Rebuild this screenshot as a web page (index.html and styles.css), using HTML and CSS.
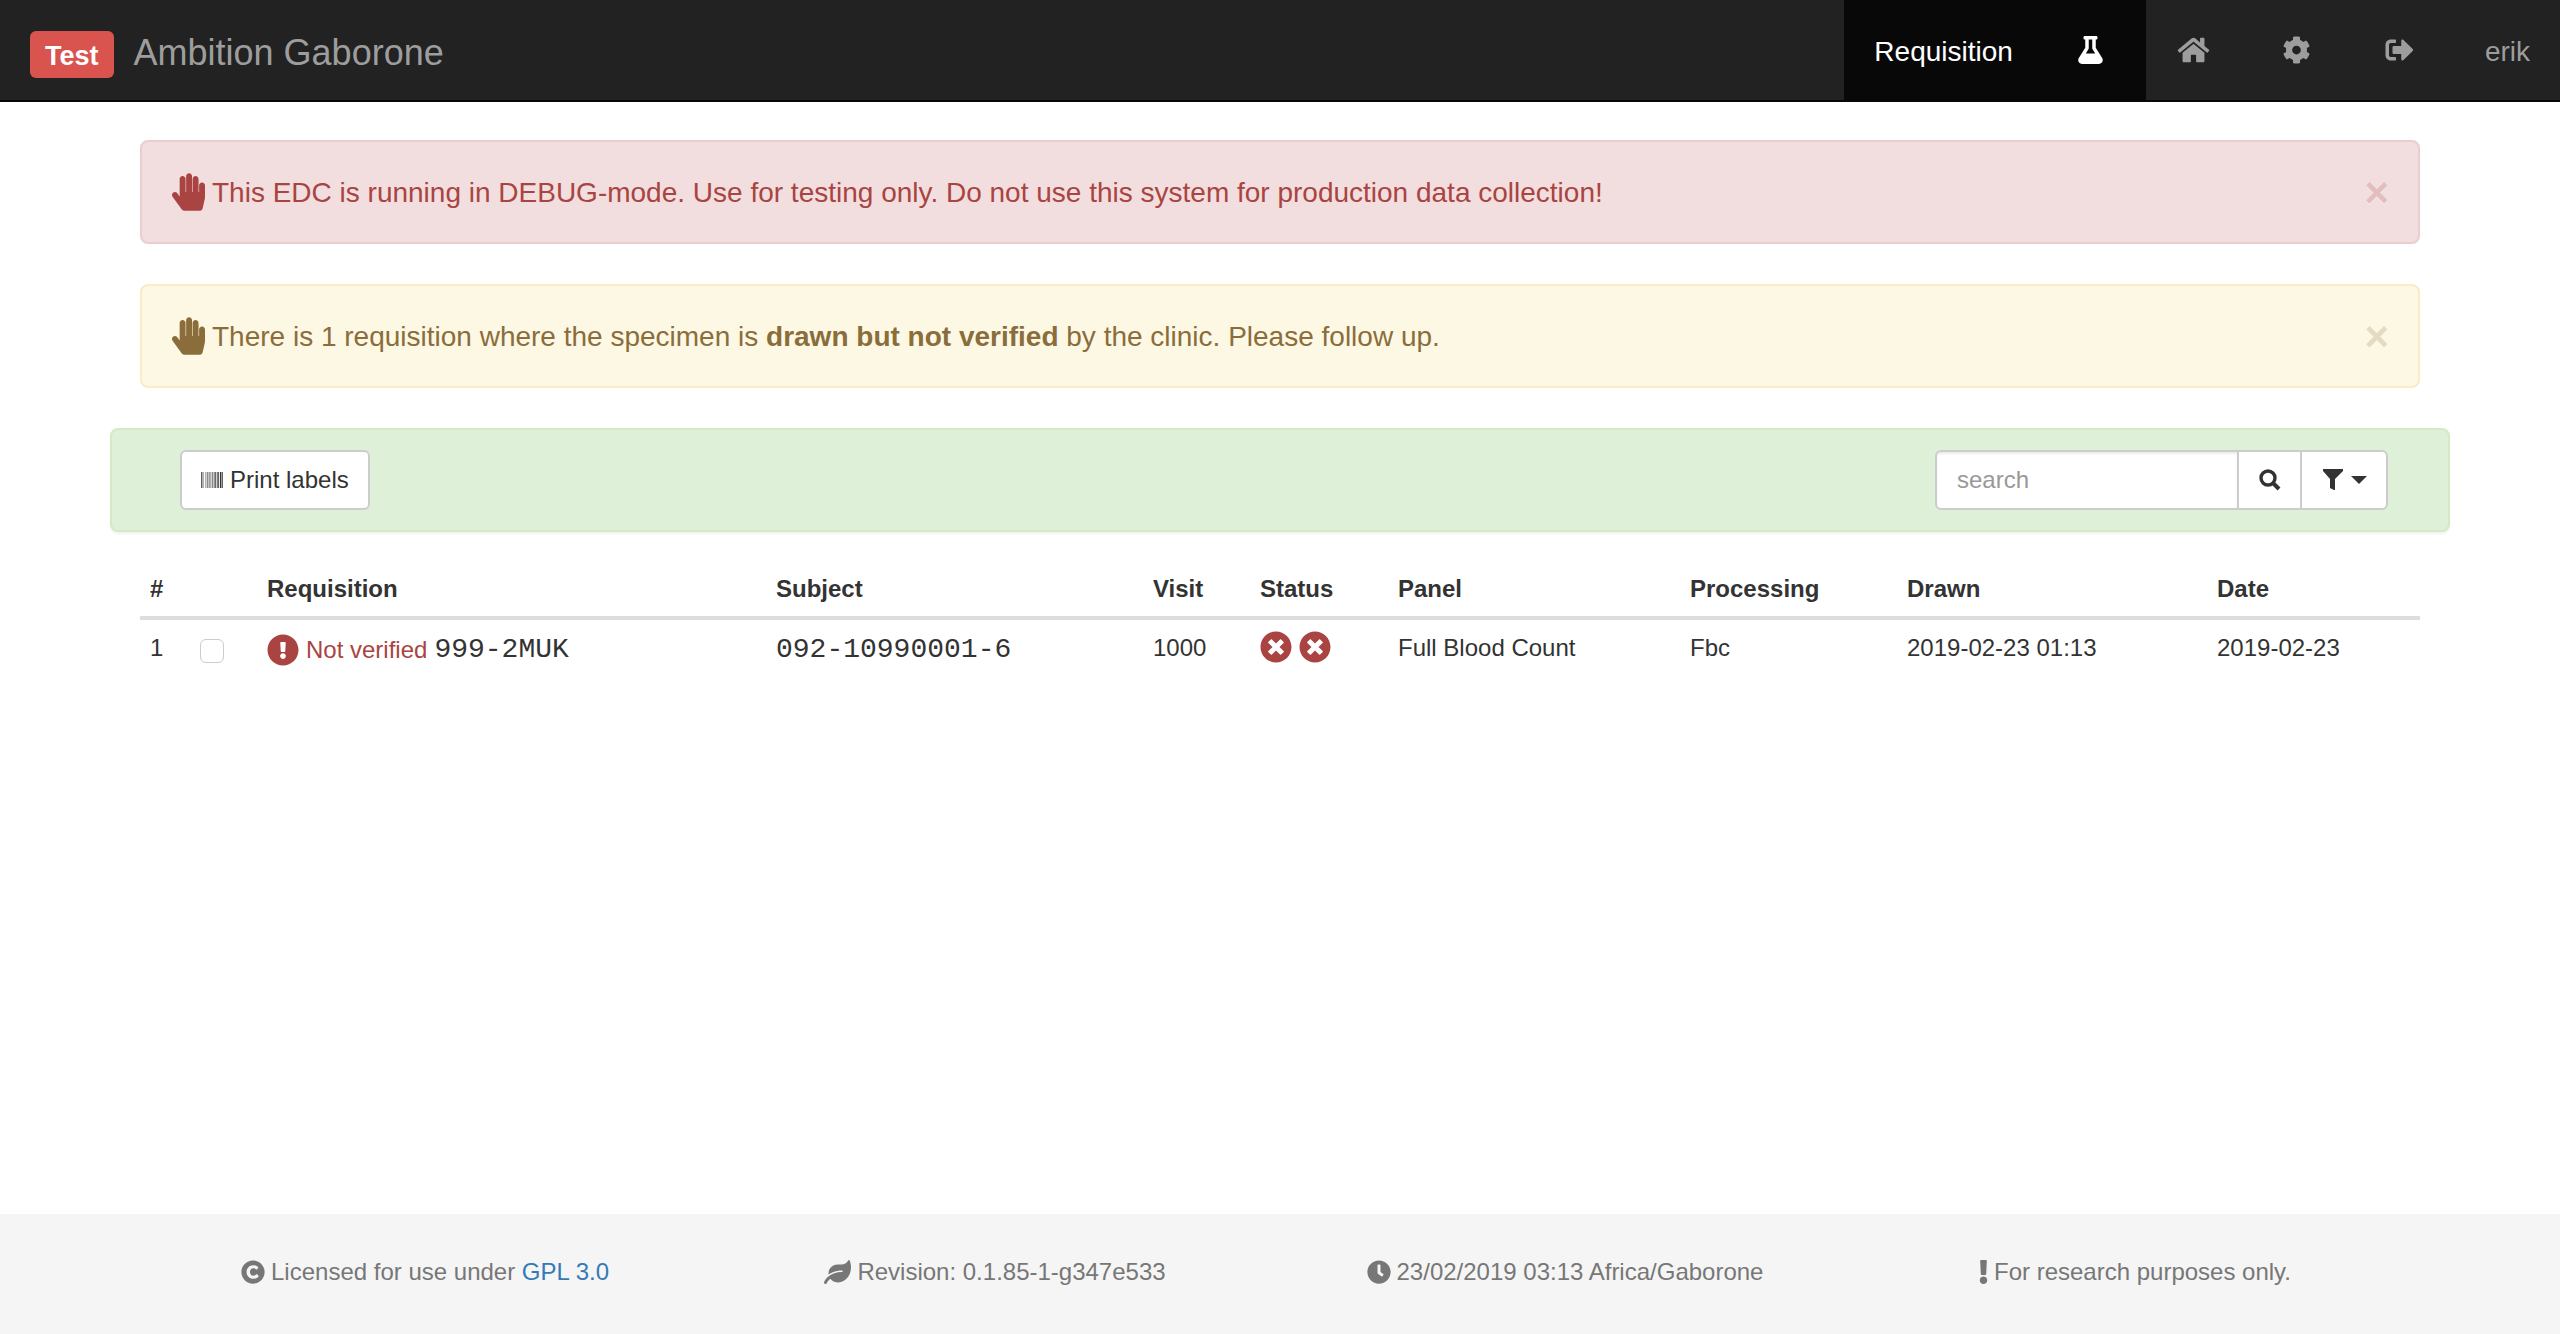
FILE: index.html
```html
<!DOCTYPE html>
<html lang="en">
<head>
<meta charset="utf-8">
<title>Ambition Gaborone</title>
<link rel="stylesheet" href="styles.css">
</head>
<body>
<nav class="navbar">
  <div class="brand"><span class="label">Test</span><a class="brand-link" href="#">Ambition Gaborone</a></div>
  <ul class="nav">
    <li class="active"><a href="#">Requisition</a></li>
    <li class="active"><a href="#" class="icon-link" aria-label="Laboratory"><svg class="nav-icon" viewBox="-96 0 640 512"><path d="M437.2 403.5L320 215V64h8c13.3 0 24-10.7 24-24V24c0-13.3-10.7-24-24-24H120c-13.3 0-24 10.7-24 24v16c0 13.3 10.7 24 24 24h8v151L10.8 403.5C-18.5 450.6 15.3 512 70.9 512h306.2c55.7 0 89.4-61.5 60.1-108.5zM137.9 320l48.2-77.6c3.7-5.2 5.8-11.6 5.8-18.4V64h64v160c0 6.9 2.2 13.2 5.8 18.4l48.2 77.6h-172z"/></svg></a></li>
    <li><a href="#" class="icon-link" aria-label="Home"><svg class="nav-icon" viewBox="-32 0 640 512"><path d="M488 312.7V456c0 13.3-10.7 24-24 24H348c-6.6 0-12-5.4-12-12V356c0-6.6-5.4-12-12-12h-72c-6.6 0-12 5.4-12 12v112c0 6.6-5.4 12-12 12H112c-13.3 0-24-10.7-24-24V312.7c0-3.6 1.6-7 4.4-9.3l188-154.8c4.4-3.6 10.8-3.6 15.3 0l188 154.8c2.7 2.3 4.3 5.7 4.3 9.3zm83.6-60.9L488 182.9V44.4c0-6.6-5.4-12-12-12h-56c-6.6 0-12 5.4-12 12V117l-89.5-73.7c-17.7-14.6-43.3-14.6-61 0L4.4 251.8c-5.1 4.2-5.8 11.8-1.6 16.9l25.5 31c4.2 5.1 11.8 5.8 16.9 1.6l235.2-193.7c4.4-3.6 10.8-3.6 15.3 0l235.2 193.7c5.1 4.2 12.7 3.5 16.9-1.6l25.5-31c4.2-5.2 3.4-12.7-1.7-16.9z"/></svg></a></li>
    <li><a href="#" class="icon-link" aria-label="Administration"><svg class="nav-icon" viewBox="-64 0 640 512"><path d="M487.4 315.7l-42.6-24.6c4.3-23.2 4.3-47 0-70.2l42.6-24.6c4.9-2.8 7.1-8.6 5.5-14-11.1-35.6-30-67.8-54.7-94.6-3.8-4.1-10-5.1-14.8-2.3L380.8 110c-17.9-15.4-38.5-27.3-60.8-35.1V25.8c0-5.6-3.9-10.5-9.4-11.7-36.7-8.2-74.3-7.8-109.2 0-5.5 1.2-9.4 6.1-9.4 11.7V75c-22.2 7.9-42.8 19.8-60.8 35.1L88.7 85.5c-4.9-2.8-11-1.9-14.8 2.3-24.7 26.7-43.6 58.9-54.7 94.6-1.7 5.4.6 11.2 5.5 14L67.3 221c-4.3 23.2-4.3 47 0 70.2l-42.6 24.6c-4.9 2.8-7.1 8.6-5.5 14 11.1 35.6 30 67.8 54.7 94.6 3.8 4.1 10 5.1 14.8 2.3l42.6-24.6c17.9 15.4 38.5 27.3 60.8 35.1v49.2c0 5.6 3.9 10.5 9.4 11.7 36.7 8.2 74.3 7.8 109.2 0 5.5-1.2 9.4-6.1 9.4-11.7v-49.2c22.2-7.9 42.8-19.8 60.8-35.1l42.6 24.6c4.9 2.8 11 1.9 14.8-2.3 24.7-26.7 43.6-58.9 54.7-94.6 1.5-5.5-.7-11.3-5.6-14.1zM256 336c-44.1 0-80-35.9-80-80s35.9-80 80-80 80 35.9 80 80-35.9 80-80 80z"/></svg></a></li>
    <li><a href="#" class="icon-link" aria-label="Log out"><svg class="nav-icon" viewBox="-64 0 640 512"><path d="M497 273L329 441c-15 15-41 4.5-41-17v-96H152c-13.3 0-24-10.7-24-24v-96c0-13.3 10.7-24 24-24h136V88c0-21.4 25.9-32 41-17l168 168c9.3 9.4 9.3 24.6 0 34zM192 436v-40c0-6.6-5.4-12-12-12H96c-17.7 0-32-14.3-32-32V160c0-17.7 14.3-32 32-32h84c6.6 0 12-5.4 12-12V76c0-6.6-5.4-12-12-12H96c-53 0-96 43-96 96v192c0 53 43 96 96 96h84c6.6 0 12-5.4 12-12z"/></svg></a></li>
    <li><a href="#">erik</a></li>
  </ul>
</nav>

<main class="container">
  <div class="alert alert-danger" role="alert">
    <svg class="alert-icon" viewBox="0 0 448 512"><path d="M408.781 128.007C386.356 127.578 368 146.36 368 168.79V256h-8V79.79c0-22.43-18.356-41.212-40.781-40.783C297.488 39.423 280 57.169 280 79v177h-8V40.79C272 18.36 253.644-.422 231.219.007 209.488.423 192 18.169 192 40v216h-8V80.79c0-22.43-18.356-41.212-40.781-40.783C121.488 40.423 104 58.169 104 80v235.992l-31.648-43.519c-12.993-17.866-38.009-21.817-55.877-8.823-17.865 12.994-21.815 38.01-8.822 55.877l125.601 172.705A48 48 0 0 0 172.073 512h197.59c22.274 0 41.622-15.324 46.724-37.006l26.508-112.66a192.011 192.011 0 0 0 5.104-43.975V168c.001-21.831-17.487-39.577-39.218-39.993z"/></svg>
    <span class="alert-text">This EDC is running in DEBUG-mode. Use for testing only. Do not use this system for production data collection!</span>
    <button type="button" class="close" aria-label="Close">×</button>
  </div>
  <div class="alert alert-warning" role="alert">
    <svg class="alert-icon" viewBox="0 0 448 512"><path d="M408.781 128.007C386.356 127.578 368 146.36 368 168.79V256h-8V79.79c0-22.43-18.356-41.212-40.781-40.783C297.488 39.423 280 57.169 280 79v177h-8V40.79C272 18.36 253.644-.422 231.219.007 209.488.423 192 18.169 192 40v216h-8V80.79c0-22.43-18.356-41.212-40.781-40.783C121.488 40.423 104 58.169 104 80v235.992l-31.648-43.519c-12.993-17.866-38.009-21.817-55.877-8.823-17.865 12.994-21.815 38.01-8.822 55.877l125.601 172.705A48 48 0 0 0 172.073 512h197.59c22.274 0 41.622-15.324 46.724-37.006l26.508-112.66a192.011 192.011 0 0 0 5.104-43.975V168c.001-21.831-17.487-39.577-39.218-39.993z"/></svg>
    <span class="alert-text">There is 1 requisition where the specimen is <strong>drawn but not verified</strong> by the clinic. Please follow up.</span>
    <button type="button" class="close" aria-label="Close">×</button>
  </div>

  <form class="toolbar">
    <button type="button" class="btn print"><svg class="barcode" viewBox="0 64 512 384" preserveAspectRatio="none"><path d="M0 448V64h18v384H0zm26.857-.273V64H36v383.727h-9.143zm27.143 0V64h8.857v383.727H54zm44.857 0V64h8.857v383.727h-8.857zm36 0V64h17.714v383.727h-17.714zm44.857 0V64h8.857v383.727h-8.857zm18 0V64h8.857v383.727h-8.857zm18 0V64h8.857v383.727h-8.857zm35.715 0V64h18v383.727h-18zm44.857 0V64h18v383.727h-18zm35.999 0V64h18.001v383.727h-18.001zm36.001 0V64h18.001v383.727h-18.001zm26.857 0V64h18v383.727h-18zm45.143 0V64h26.857v383.727h-26.857zm35.714 0V64h9.143v383.727H476zm18 .273V64h18v384h-18z"/></svg>Print labels</button>
    <div class="search-group">
      <input class="search" type="text" placeholder="search" aria-label="search">
      <button type="button" class="btn find" aria-label="Search"><svg class="btn-icon" viewBox="0 0 22 22"><circle cx="9" cy="9" r="7" fill="none" stroke="currentColor" stroke-width="3.4"/><path d="M14 14l6 6" stroke="currentColor" stroke-width="4"/></svg></button>
      <button type="button" class="btn filter" aria-label="Filter"><svg class="btn-icon" viewBox="0 0 22 22"><path d="M1 0h20v2l-8 8v11h-1l-4-2v-9l-7-8z"/></svg><span class="caret"></span></button>
    </div>
  </form>

  <table class="results">
    <colgroup><col class="c-num"><col class="c-check"><col class="c-req"><col class="c-subject"><col class="c-visit"><col class="c-status"><col class="c-panel"><col class="c-proc"><col class="c-drawn"><col class="c-date"></colgroup>
    <thead>
      <tr><th>#</th><th></th><th>Requisition</th><th>Subject</th><th>Visit</th><th>Status</th><th>Panel</th><th>Processing</th><th>Drawn</th><th>Date</th></tr>
    </thead>
    <tbody>
      <tr>
        <td>1</td>
        <td><input class="tick" type="checkbox" aria-label="Select 999-2MUK"></td>
        <td><div class="req"><svg class="mark" viewBox="0 0 512 512"><path d="M504 256c0 136.997-111.043 248-248 248S8 392.997 8 256C8 119.083 119.043 8 256 8s248 111.083 248 248zm-248 50c-25.405 0-46 20.595-46 46s20.595 46 46 46 46-20.595 46-46-20.595-46-46-46zm-43.673-165.346l7.418 136c.347 6.364 5.609 11.346 11.982 11.346h48.546c6.373 0 11.635-4.982 11.982-11.346l7.418-136c.375-6.874-5.098-12.654-11.982-12.654h-63.383c-6.884 0-12.356 5.78-11.981 12.654z"/></svg><span class="danger">Not verified</span><span class="mono">999-2MUK</span></div></td>
        <td><div class="req"><span class="mono">092-10990001-6</span></div></td>
        <td>1000</td>
        <td><div class="marks"><svg class="mark" viewBox="0 0 512 512"><path d="M256 8C119 8 8 119 8 256s111 248 248 248 248-111 248-248S393 8 256 8zm121.600 313.100c4.700 4.700 4.700 12.300 0 17L338 377.600c-4.700 4.700-12.300 4.700-17 0L256 312l-65.100 65.600c-4.700 4.700-12.300 4.700-17 0L134.400 338c-4.700-4.700-4.700-12.300 0-17l65.600-65-65.600-65.100c-4.700-4.700-4.700-12.300 0-17l39.600-39.600c4.700-4.700 12.300-4.700 17 0l65 65.700 65.100-65.600c4.700-4.700 12.300-4.700 17 0l39.600 39.600c4.700 4.700 4.700 12.300 0 17L312 256l65.600 65.100z"/></svg><svg class="mark" viewBox="0 0 512 512"><path d="M256 8C119 8 8 119 8 256s111 248 248 248 248-111 248-248S393 8 256 8zm121.600 313.100c4.700 4.700 4.700 12.300 0 17L338 377.600c-4.700 4.700-12.300 4.700-17 0L256 312l-65.100 65.600c-4.700 4.700-12.300 4.700-17 0L134.400 338c-4.700-4.700-4.700-12.300 0-17l65.600-65-65.600-65.100c-4.700-4.700-4.700-12.300 0-17l39.600-39.600c4.700-4.700 12.300-4.700 17 0l65 65.700 65.100-65.600c4.700-4.700 12.300-4.700 17 0l39.600 39.600c4.700 4.700 4.700 12.300 0 17L312 256l65.600 65.100z"/></svg></div></td>
        <td>Full Blood Count</td>
        <td>Fbc</td>
        <td>2019-02-23 01:13</td>
        <td>2019-02-23</td>
      </tr>
    </tbody>
  </table>
</main>

<footer class="footer">
  <div class="footer-row">
    <div class="note"><svg class="foot-icon" viewBox="0 0 512 512"><path d="M256 8C119.033 8 8 119.033 8 256s111.033 248 248 248 248-111.033 248-248S392.967 8 256 8zm117.134 346.753c-1.592 1.867-39.776 45.731-109.851 45.731-84.692 0-144.484-63.260-144.484-145.567 0-81.303 62.004-143.401 143.762-143.401 66.957 0 101.965 37.315 103.422 38.904a12 12 0 0 1 1.238 14.623l-22.380 34.655c-4.049 6.267-12.774 7.351-18.234 2.295-.233-.214-26.529-23.880-61.880-23.880-46.116 0-73.916 33.575-73.916 76.082 0 39.602 25.514 79.692 74.277 79.692 38.697 0 65.280-28.338 65.544-28.625 5.132-5.565 14.059-5.033 18.508 1.053l24.547 33.572a12.001 12.001 0 0 1-.553 14.866z"/></svg><span>Licensed for use under <a class="link" href="#">GPL 3.0</a></span></div>
    <div class="note"><svg class="foot-icon" viewBox="0 0 576 512"><path d="M546.200 9.700c-5.600-12.500-21.600-13-28.300-1.200C486.900 62.400 431.400 96 368 96h-80C182 96 96 182 96 288c0 7 .8 13.700 1.500 20.500C161.300 262.800 253.400 224 384 224c8.800 0 16 7.200 16 16s-7.200 16-16 16C132.600 256 26 410.100 2.400 468c-6.600 16.300 1.200 34.900 17.500 41.600 16.400 6.800 35-1.100 41.800-17.300 1.500-3.600 20.900-47.900 71.900-90.600 32.400 43.900 94 85.800 174.900 77.200C465.500 467.500 576 326.700 576 154.300c0-50.200-10.800-102.200-29.800-144.600z"/></svg><span>Revision: 0.1.85-1-g347e533</span></div>
    <div class="note"><svg class="foot-icon" viewBox="0 0 512 512"><path d="M256,8C119,8,8,119,8,256S119,504,256,504,504,393,504,256,393,8,256,8Zm92.490,313h0l-20,25a16,16,0,0,1-22.490,2.500h0l-67-49.720a40,40,0,0,1-15-31.230V112a16,16,0,0,1,16-16h32a16,16,0,0,1,16,16V256l58,42.500A16,16,0,0,1,348.490,321Z"/></svg><span>23/02/2019 03:13 Africa/Gaborone</span></div>
    <div class="note"><svg class="foot-icon" viewBox="0 0 192 512"><path d="M176 432c0 44.112-35.888 80-80 80s-80-35.888-80-80 35.888-80 80-80 80 35.888 80 80zM25.260 25.199l13.600 272C39.499 309.972 50.041 320 62.830 320h66.340c12.789 0 23.331-10.028 23.970-22.801l13.600-272C167.425 11.490 156.496 0 142.770 0H49.230C35.504 0 24.575 11.490 25.260 25.199z"/></svg><span>For research purposes only.</span></div>
  </div>
</footer>
</body>
</html>
```
FILE: styles.css
```css
* { box-sizing: border-box; }
body {
  margin: 0;
  min-height: 100vh;
  display: flex;
  flex-direction: column;
  background: #fff;
  color: #333;
  font-family: "Liberation Sans", Arial, sans-serif;
  font-size: 24px;
  line-height: 34px;
}
svg { display: block; flex: none; fill: currentColor; }
a { text-decoration: none; }
button, input { font: inherit; margin: 0; }

.navbar {
  display: flex;
  justify-content: space-between;
  background: #222;
  border-bottom: 2px solid #080808;
}
.brand {
  display: flex;
  align-items: center;
  gap: 20px;
  padding-left: 30px;
  font-size: 36px;
  line-height: 40px;
}
.label {
  margin-top: 9px;
  padding: 5px 15px 2px;
  border-radius: 6px;
  background: #d9534f;
  color: #fff;
  font-size: 27px;
  font-weight: bold;
}
.brand-link { padding-top: 5px; color: #9d9d9d; }
.nav { display: flex; margin: 0; padding: 0; list-style: none; font-size: 28px; }
.nav a { display: block; padding: 32px 30px 28px; line-height: 40px; color: #9d9d9d; }
.nav .icon-link { padding: 30px 38px 30px 30px; }
.nav .active { background: #080808; }
.nav .active a { color: #fff; }
.nav-icon { width: 35px; height: 40px; }

.container { width: 100%; max-width: 2340px; margin: 0 auto; padding: 38px 30px; flex: 1; }
.alert {
  display: flex;
  align-items: flex-start;
  gap: 7px;
  margin-bottom: 40px;
  padding: 31px 29px 29px 30px;
  border: 2px solid;
  border-radius: 8px;
  font-size: 28px;
  line-height: 40px;
}
.alert-danger { color: #a94442; background: #f2dede; border-color: #ebccd1; }
.alert-warning { color: #8a6d3b; background: #fcf8e3; border-color: #faebcc; }
.alert-icon { width: 33px; height: 38px; }
.alert-text { flex: 1; }
.close {
  padding: 0;
  border: 0;
  background: none;
  color: inherit;
  font-size: 42px;
  font-weight: bold;
  line-height: 40px;
  text-shadow: 0 2px 0 #fff;
  opacity: .2;
}

.toolbar {
  display: flex;
  justify-content: space-between;
  margin: 0 -30px 30px;
  padding: 20px 60px 20px 68px;
  border: 2px solid #d6e9c6;
  border-radius: 8px;
  background: #dff0d8;
  box-shadow: 0 2px 2px rgba(0, 0, 0, .05);
}
.btn {
  display: flex;
  align-items: center;
  justify-content: center;
  height: 60px;
  padding: 0 19px;
  border: 2px solid #ccc;
  border-radius: 6px;
  background: #fff;
  color: #333;
}
.print { gap: 7px; }
.barcode { width: 22px; height: 16px; }
.search-group { display: flex; }
.search {
  width: 304px;
  height: 60px;
  padding: 0 20px;
  border: 2px solid #ccc;
  border-radius: 6px 0 0 6px;
  background: #fff;
  box-shadow: inset 0 2px 2px rgba(0, 0, 0, .075);
  color: #555;
}
.search::placeholder { color: #999; opacity: 1; }
.find { width: 65px; margin-left: -2px; border-radius: 0; }
.filter { width: 88px; margin-left: -2px; border-radius: 0 6px 6px 0; gap: 7px; }
.btn-icon { width: 22px; height: 22px; }
.caret { border: 8px solid transparent; border-top-color: currentColor; border-bottom: 0; }

.results { width: 100%; table-layout: fixed; border-collapse: separate; border-spacing: 0; }
.results th { padding: 10px; border-bottom: 4px solid #ddd; text-align: left; }
.results td { padding: 11px 10px; vertical-align: top; white-space: nowrap; }
.c-num { width: 50px; }
.c-check { width: 67px; }
.c-req { width: 509px; }
.c-subject { width: 377px; }
.c-visit { width: 107px; }
.c-status { width: 138px; }
.c-panel { width: 292px; }
.c-proc { width: 217px; }
.c-drawn { width: 310px; }
.c-date { width: 213px; }
.tick {
  display: block;
  appearance: none;
  width: 24px;
  height: 24px;
  margin-top: 8px;
  border: 1px solid #ccc;
  border-radius: 6px;
  background: #fff;
}
.req { display: flex; align-items: center; gap: 7px; line-height: 38px; }
.mono { font-family: "Liberation Mono", "Courier New", monospace; font-size: 28px; }
.mark { width: 32px; height: 32px; color: #a94442; }
.marks { display: flex; gap: 7px; }
.danger { color: #a94442; }

.footer { background: #f5f5f5; color: #777; }
.footer-row {
  display: grid;
  grid-template-columns: repeat(4, 1fr);
  max-width: 2280px;
  margin: 0 auto;
  padding: 41px 0 45px;
}
.note { display: flex; align-items: center; justify-content: center; gap: 6px; }
.foot-icon { height: 24px; }
.link { color: #337ab7; }
```
